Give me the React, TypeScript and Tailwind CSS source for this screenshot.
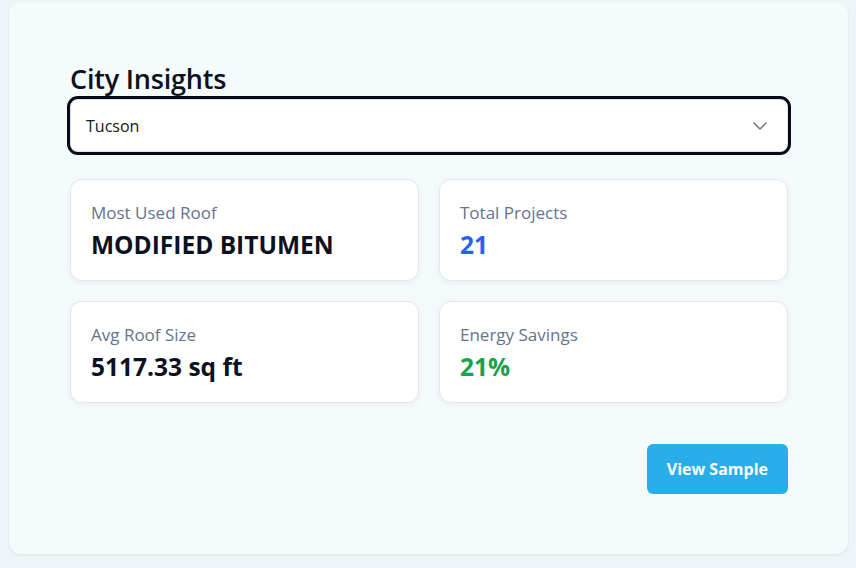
import { ChevronDown } from "lucide-react"

const stats = [
  { label: "Most Used Roof", value: "MODIFIED BITUMEN", color: "text-[#0b1120]" },
  { label: "Total Projects", value: "21", color: "text-[#2563eb]" },
  { label: "Avg Roof Size", value: "5117.33 sq ft", color: "text-[#0b1120]" },
  { label: "Energy Savings", value: "21%", color: "text-[#16a34a]" },
]

export default function App() {
  return (
    <div
      className="min-h-[568px] w-[856px] bg-[#edf5f8] pt-[2px] pl-[9px]"
      style={{ fontFamily: '"Open Sans", "Noto Sans", sans-serif' }}
    >
      <div className="w-[839px] h-[552px] rounded-xl bg-[#f5fafb] shadow-[0_1px_3px_rgba(15,23,42,0.08)] pt-[60px] pl-[61px] pr-[60px]">
        <h2 className="text-[27px] leading-[34px] font-semibold text-[#0b1120] tracking-[-0.2px]">City Insights</h2>
        <div className="mt-[3px] relative rounded-lg border border-[#dde3ec] bg-white outline-[3px] outline-[#070b18] outline-solid">
          <div className="px-[15px] pt-[14px] pb-[13px] text-base leading-6 text-[#111827]">Tucson</div>
          <ChevronDown
            className="absolute right-[15px] top-1/2 -translate-y-1/2 text-[#6b7280]"
            size={24}
            strokeWidth={1.5}
          />
        </div>
        <div className="mt-[27px] grid grid-cols-2 gap-5">
          {stats.map((s) => (
            <div
              key={s.label}
              className="rounded-xl border border-[#e2e8f0] bg-white px-5 pt-[21px] pb-[19px] shadow-[0_2px_6px_rgba(15,23,42,0.05)]"
            >
              <div className="text-[17px] leading-6 text-[#64748b]">{s.label}</div>
              <div className={`mt-1 text-[24.5px] leading-8 font-bold ${s.color}`}>{s.value}</div>
            </div>
          ))}
        </div>
        <div className="mt-[41px] flex justify-end">
          <button className="rounded-md bg-[#29aeea] px-5 py-[11px] text-[16px] leading-7 font-bold text-white">
            View Sample
          </button>
        </div>
      </div>
    </div>
  )
}
